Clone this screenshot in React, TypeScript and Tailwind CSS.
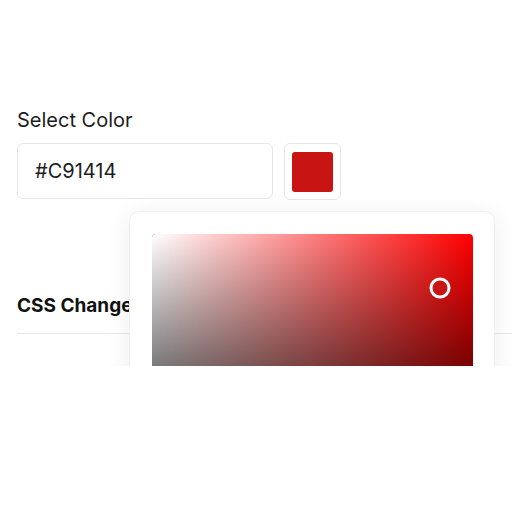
export default function App() {
  return (
    <div
      className="relative h-[366px] overflow-hidden bg-white pl-[17px] pt-[106px]"
      style={{ fontFamily: "Inter, 'Liberation Sans', sans-serif" }}
    >
      <div className="text-[20px] leading-[28px] text-[#1c1c1c]">Select Color</div>
      <div className="relative mt-[9px] flex gap-[11px]">
        <div className="flex h-[56px] w-[256px] items-center rounded-[6px] border border-[#e6e6e6] pl-[17px] text-[20px] text-[#1c1c1c]">
          #C91414
        </div>
        <div className="flex h-[57px] w-[57px] items-center justify-center rounded-[6px] border border-[#e6e6e6]">
          <div className="h-[40px] w-[41px] rounded-[3px] bg-[#C91414]" />
        </div>
        <div className="absolute left-[112px] top-[68px] z-10 w-[366px] rounded-[10px] border border-[#f0f0f0] bg-white p-[22px] shadow-[0_4px_24px_rgba(0,0,0,0.08)]">
          <div className="relative h-[255px] w-[321px] overflow-hidden rounded-[4px] bg-[#ff0000]">
            <div className="absolute inset-0 bg-gradient-to-r from-white to-transparent" />
            <div className="absolute inset-0 bg-gradient-to-t from-black to-transparent" />
            <div className="absolute left-[288px] top-[54px] h-[21px] w-[21px] -translate-x-1/2 -translate-y-1/2 rounded-full border-[3px] border-white bg-[#C91414]" />
          </div>
        </div>
      </div>
      <div className="mt-[92px] border-b border-[#e8e8e8] pb-[13px] text-[19px] font-bold leading-[28px] text-[#111]">
        CSS Changes
      </div>
    </div>
  );
}
